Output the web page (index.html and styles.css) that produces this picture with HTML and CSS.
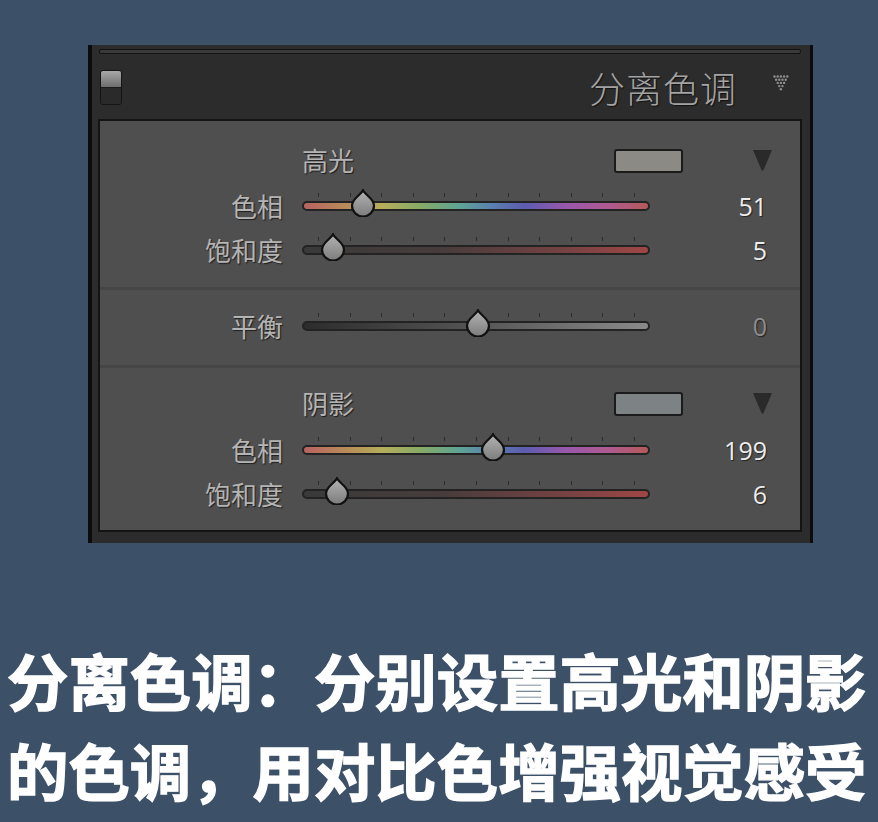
FILE: index.html
```html
<!DOCTYPE html>
<html lang="zh">
<head>
<meta charset="utf-8">
<title>分离色调</title>
<link rel="stylesheet" href="styles.css">
</head>
<body>
<div class="panel">
  <div class="topbar"></div>
  <div class="head">
    <div class="toggle"><span class="toggle-on"></span><span class="toggle-off"></span></div>
    <div class="title">分离色调</div>
    <svg class="dots" width="16" height="17" viewBox="0 0 16 17">
      <g fill="#8e8e8e">
        <circle cx="1.5" cy="1.5" r="1.2"/><circle cx="4.7" cy="1.5" r="1.2"/><circle cx="7.9" cy="1.5" r="1.2"/><circle cx="11.1" cy="1.5" r="1.2"/><circle cx="14.3" cy="1.5" r="1.2"/>
        <circle cx="3.1" cy="4.7" r="1.2"/><circle cx="6.3" cy="4.7" r="1.2"/><circle cx="9.5" cy="4.7" r="1.2"/><circle cx="12.7" cy="4.7" r="1.2"/>
        <circle cx="4.7" cy="7.9" r="1.2"/><circle cx="7.9" cy="7.9" r="1.2"/><circle cx="11.1" cy="7.9" r="1.2"/>
        <circle cx="6.3" cy="11.1" r="1.2"/><circle cx="9.5" cy="11.1" r="1.2"/>
        <circle cx="7.9" cy="14.3" r="1.2"/>
      </g>
    </svg>
  </div>
  <div class="inner">
    <section class="sec sec-hi">
      <div class="sec-head">
        <span class="sec-title">高光</span>
        <span class="swatch swatch-hi"></span>
        <svg class="drop" width="19" height="21" viewBox="0 0 19 21"><path d="M0 0 H19 L10.5 20 Q9.5 21.5 8.5 20 Z" fill="#2a2a2a"/></svg>
      </div>
      <div class="row row-gap2">
        <span class="label">色相</span>
        <div class="slider">
          <div class="ticks"><i></i><i></i><i></i><i></i><i></i><i></i><i></i><i></i><i></i><i></i><i></i></div>
          <div class="track track-hue"></div>
          <svg class="thumb" style="--pos:61px" width="26" height="28" viewBox="0 0 26 28"><path d="M13 1.2 C14.8 5.8 24 9.5 24 16.5 A11 11 0 0 1 2 16.5 C2 9.5 11.2 5.8 13 1.2 Z" fill="url(#tg)" stroke="#111" stroke-width="2.2"/></svg>
        </div>
        <span class="value">51</span>
      </div>
      <div class="row">
        <span class="label">饱和度</span>
        <div class="slider">
          <div class="ticks"><i></i><i></i><i></i><i></i><i></i><i></i><i></i><i></i><i></i><i></i><i></i></div>
          <div class="track track-sat"></div>
          <svg class="thumb" style="--pos:31px" width="26" height="28" viewBox="0 0 26 28"><path d="M13 1.2 C14.8 5.8 24 9.5 24 16.5 A11 11 0 0 1 2 16.5 C2 9.5 11.2 5.8 13 1.2 Z" fill="url(#tg)" stroke="#111" stroke-width="2.2"/></svg>
        </div>
        <span class="value">5</span>
      </div>
    </section>
    <section class="sec sec-bal">
      <div class="row">
        <span class="label">平衡</span>
        <div class="slider">
          <div class="ticks"><i></i><i></i><i></i><i></i><i></i><i></i><i></i><i></i><i></i><i></i><i></i></div>
          <div class="track track-bal"></div>
          <svg class="thumb" style="--pos:176px" width="26" height="28" viewBox="0 0 26 28"><path d="M13 1.2 C14.8 5.8 24 9.5 24 16.5 A11 11 0 0 1 2 16.5 C2 9.5 11.2 5.8 13 1.2 Z" fill="url(#tg)" stroke="#111" stroke-width="2.2"/></svg>
        </div>
        <span class="value value-dim">0</span>
      </div>
    </section>
    <section class="sec sec-sh">
      <div class="sec-head">
        <span class="sec-title">阴影</span>
        <span class="swatch swatch-sh"></span>
        <svg class="drop" width="19" height="21" viewBox="0 0 19 21"><path d="M0 0 H19 L10.5 20 Q9.5 21.5 8.5 20 Z" fill="#2a2a2a"/></svg>
      </div>
      <div class="row row-gap3">
        <span class="label">色相</span>
        <div class="slider">
          <div class="ticks"><i></i><i></i><i></i><i></i><i></i><i></i><i></i><i></i><i></i><i></i><i></i></div>
          <div class="track track-hue"></div>
          <svg class="thumb" style="--pos:191px" width="26" height="28" viewBox="0 0 26 28"><path d="M13 1.2 C14.8 5.8 24 9.5 24 16.5 A11 11 0 0 1 2 16.5 C2 9.5 11.2 5.8 13 1.2 Z" fill="url(#tg)" stroke="#111" stroke-width="2.2"/></svg>
        </div>
        <span class="value">199</span>
      </div>
      <div class="row">
        <span class="label">饱和度</span>
        <div class="slider">
          <div class="ticks"><i></i><i></i><i></i><i></i><i></i><i></i><i></i><i></i><i></i><i></i><i></i></div>
          <div class="track track-sat"></div>
          <svg class="thumb" style="--pos:35px" width="26" height="28" viewBox="0 0 26 28"><path d="M13 1.2 C14.8 5.8 24 9.5 24 16.5 A11 11 0 0 1 2 16.5 C2 9.5 11.2 5.8 13 1.2 Z" fill="url(#tg)" stroke="#111" stroke-width="2.2"/></svg>
        </div>
        <span class="value">6</span>
      </div>
    </section>
  </div>
</div>
<div class="caption">
  <p>分离色调：分别设置高光和阴影</p>
  <p>的色调，用对比色增强视觉感受</p>
</div>
<svg class="defs" width="0" height="0">
  <defs>
    <linearGradient id="tg" x1="0" y1="0" x2="0" y2="1">
      <stop offset="0" stop-color="#b4b4b4"/>
      <stop offset="1" stop-color="#7c7c7c"/>
    </linearGradient>
  </defs>
</svg>
</body>
</html>
```

FILE: styles.css
```css
html, body {
  margin: 0;
  padding: 0;
}
body {
  background: #3c5068;
  width: 878px;
  height: 822px;
  overflow: hidden;
  font-family: "Noto Sans CJK SC", "Noto Sans", sans-serif;
}
.panel {
  margin: 45px 0 0 88px;
  width: 718px;
  background: #2c2c2c;
  border-left: 4px solid #0c0c0c;
  border-right: 3px solid #0c0c0c;
  padding: 4px 0 11px;
}
.topbar {
  height: 3px;
  margin: 0 9px 0 7px;
  border: 1px solid #121212;
  border-radius: 2px;
  background: #3a3a3a;
}
.head {
  height: 65px;
  display: flex;
  align-items: center;
  padding: 0 21px 0 8px;
}
.toggle {
  width: 20px;
  height: 33px;
  border: 1px solid #141414;
  border-radius: 3px;
  display: flex;
  flex-direction: column;
  overflow: hidden;
  margin-top: 2px;
}
.toggle-on {
  flex: 1;
  background: linear-gradient(#a8a8a8, #6e6e6e);
}
.toggle-off {
  flex: 1;
  background: #2a2a2a;
  border-top: 1px solid #1a1a1a;
}
.title {
  margin-left: auto;
  color: #a3a3a3;
  font-size: 36px;
  font-weight: 300;
  letter-spacing: 1px;
  line-height: 1;
  text-shadow: 1px 1px 1px #111;
}
.dots {
  margin-left: 36px;
  margin-top: -6px;
}
.inner {
  margin: 0 8px 0 6px;
  border: 2px solid #141414;
  background: #4f4f4f;
}
.sec-hi {
  padding: 17px 0 15px;
}
.sec-bal {
  border-top: 3px solid #454545;
  padding: 14px 0 17px;
}
.sec-sh {
  border-top: 3px solid #454545;
  padding: 13px 0 14px;
}
.sec-head {
  height: 44px;
  display: flex;
  align-items: center;
  padding-left: 202px;
}
.sec-title, .label {
  color: #b4b4b4;
  font-size: 26px;
  line-height: 1;
  text-shadow: 1px 1px 1px #1e1e1e;
}
.sec-title {
  width: 312px;
}
.swatch {
  width: 65px;
  height: 20px;
  border: 2px solid #1b1b1b;
  border-radius: 3px;
  margin-top: 2px;
}
.swatch-hi { background: #8c8a85; }
.swatch-sh { background: #7d8385; }
.drop {
  margin-left: 70px;
}
.row {
  height: 44px;
  display: grid;
  grid-template-columns: 202px 348px 117px;
  align-items: center;
}
.row-gap2 { margin-top: 2px; }
.row-gap3 { margin-top: 3px; }
.label {
  text-align: right;
  padding-right: 19px;
}
.slider {
  position: relative;
  padding-bottom: 8px;
}
.ticks {
  height: 4px;
  margin-bottom: 4px;
  padding: 0 15px 0 16px;
  display: flex;
  justify-content: space-between;
}
.ticks i {
  width: 1px;
  background: #2c2c2c;
}
.track {
  height: 6px;
  border: 2px solid #232323;
  border-radius: 5px;
}
.track-hue {
  background: linear-gradient(90deg, #b86262 0%, #b88e58 13%, #b4ae5a 23%, #86aa66 34%, #5ea494 45%, #5a7eae 55%, #5c5cb0 64%, #9658ac 76%, #b05a92 88%, #b45a5a 100%);
}
.track-sat {
  background: linear-gradient(90deg, #3a3a3a 0%, #483c3c 40%, #744242 75%, #a04646 100%);
}
.track-bal {
  background: linear-gradient(90deg, #2c2c2c 0%, #555 50%, #8a8a8a 100%);
}
.thumb {
  position: absolute;
  top: -4px;
  left: calc(var(--pos) - 13px);
}
.value {
  text-align: right;
  font-family: "Open Sans", "Noto Sans", sans-serif;
  font-size: 25px;
  line-height: 1;
  color: #ececec;
  text-shadow: 1px 1px 1px #222;
}
.value-dim {
  color: #8e8e8e;
}
.caption {
  margin: 92px 0 0 7px;
  color: #ffffff;
  font-size: 61.4px;
  font-weight: 700;
  line-height: 90px;
  -webkit-text-stroke: 1.4px #ffffff;
}
.caption p {
  margin: 0;
  white-space: nowrap;
}
.defs {
  position: absolute;
}
```
